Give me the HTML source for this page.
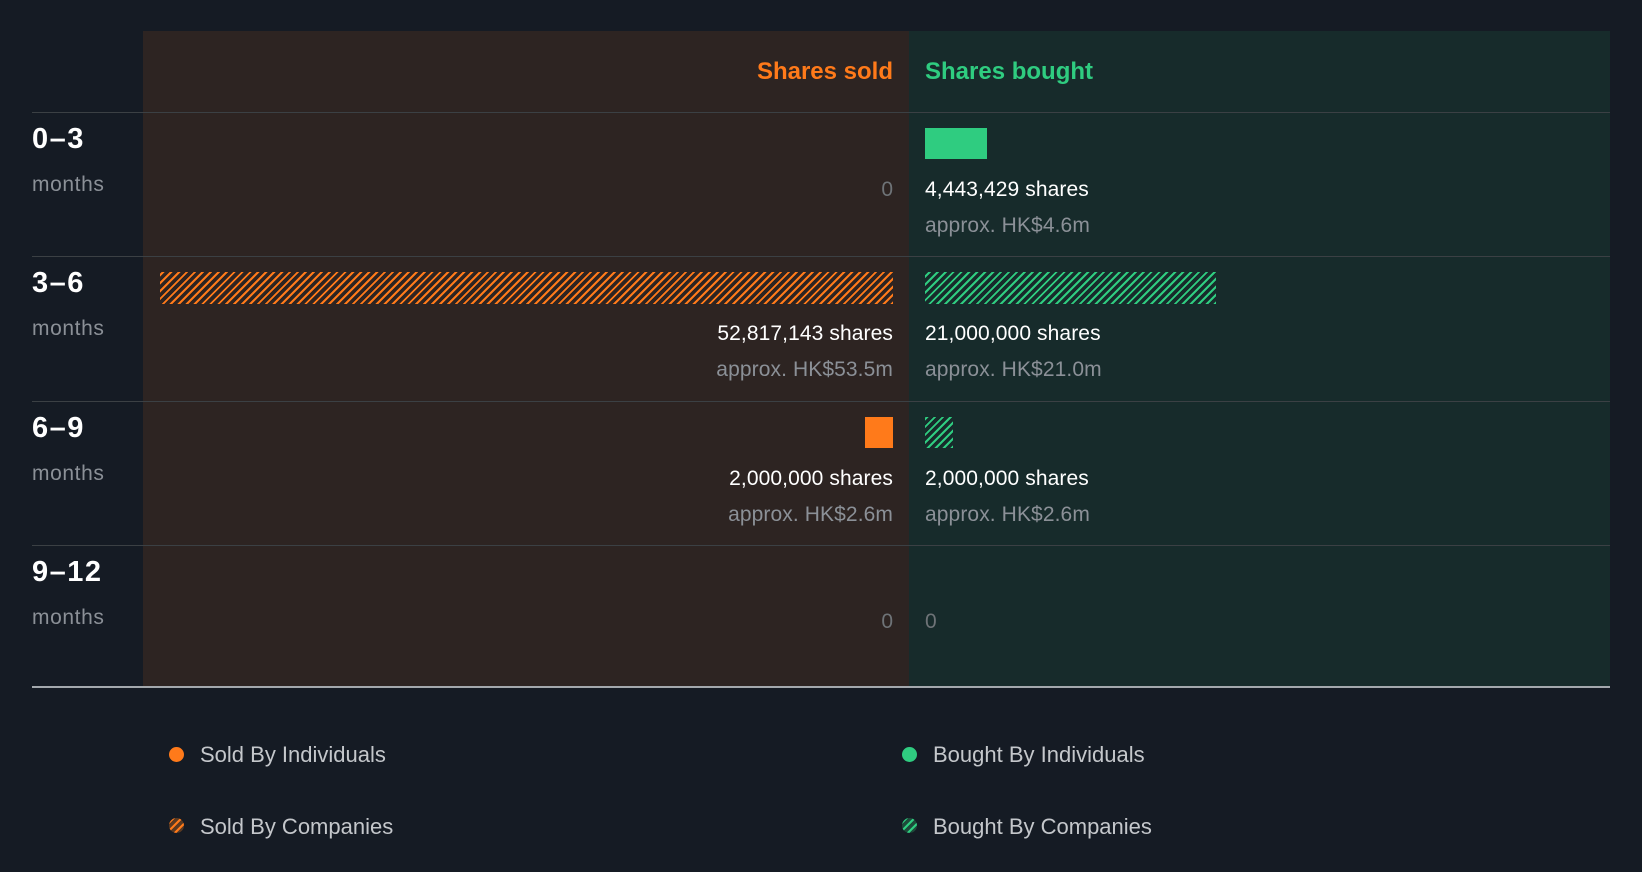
<!DOCTYPE html>
<html><head><meta charset="utf-8"><style>
*{margin:0;padding:0;box-sizing:border-box}
body{width:1642px;height:872px;background:#151b24;font-family:"Liberation Sans",sans-serif;position:relative;overflow:hidden}
.a{position:absolute;white-space:nowrap}
.sold{left:143px;width:766px;background:#2d2422}
.bought{left:909px;width:701px;background:#172b2b}
.line{left:32px;width:1578px;height:1px;background:#3b4044}
.lab{left:32px;color:#fff;font-weight:bold;font-size:29px;letter-spacing:1.5px}
.mo{left:32px;color:#8b9097;font-size:21px;letter-spacing:0.6px}
.r{right:749px;text-align:right}
.l{left:925px}
.sh{color:#fff;font-size:21px;letter-spacing:0.1px}
.ap{color:#8b9097;font-size:21px;letter-spacing:0.1px}
.z{color:#6e7377;font-size:21px}
.ho{background:repeating-linear-gradient(-45deg,#ff7a1a 0 2px,transparent 2px 5.6px)}
.hg{background:repeating-linear-gradient(-45deg,#2fcc80 0 2px,transparent 2px 5.6px)}
.leg{color:#c4c7cb;font-size:22px}
.dot{width:15px;height:15px;border-radius:50%}
</style></head><body>
<div class="a sold" style="top:31px;height:656px"></div>
<div class="a bought" style="top:31px;height:656px"></div>
<div class="a" style="right:749px;top:58px;color:#ff7a1a;font-weight:bold;font-size:24px">Shares sold</div>
<div class="a" style="left:925px;top:58px;color:#2fcc80;font-weight:bold;font-size:24px">Shares bought</div>
<div class="a line" style="top:112px"></div>
<div class="a line" style="top:256px"></div>
<div class="a line" style="top:401px"></div>
<div class="a line" style="top:545px"></div>
<div class="a line" style="top:686px;height:2px;background:#a3a8ad"></div>

<div class="a lab" style="top:123px">0–3</div><div class="a mo" style="top:173px">months</div>
<div class="a lab" style="top:267px">3–6</div><div class="a mo" style="top:317px">months</div>
<div class="a lab" style="top:412px">6–9</div><div class="a mo" style="top:462px">months</div>
<div class="a lab" style="top:556px">9–12</div><div class="a mo" style="top:606px">months</div>

<div class="a z r" style="top:178px">0</div>
<div class="a" style="left:925px;top:128px;width:62px;height:31px;background:#2fcc80"></div>
<div class="a sh l" style="top:178px">4,443,429 shares</div>
<div class="a ap l" style="top:214px">approx. HK$4.6m</div>

<div class="a ho" style="left:160px;top:272px;width:733px;height:32px"></div>
<div class="a hg" style="left:925px;top:272px;width:291px;height:32px"></div>
<div class="a sh r" style="top:322px">52,817,143 shares</div>
<div class="a ap r" style="top:358px">approx. HK$53.5m</div>
<div class="a sh l" style="top:322px">21,000,000 shares</div>
<div class="a ap l" style="top:358px">approx. HK$21.0m</div>

<div class="a" style="left:865px;top:417px;width:28px;height:31px;background:#ff7a1a"></div>
<div class="a hg" style="left:925px;top:417px;width:28px;height:31px"></div>
<div class="a sh r" style="top:467px">2,000,000 shares</div>
<div class="a ap r" style="top:503px">approx. HK$2.6m</div>
<div class="a sh l" style="top:467px">2,000,000 shares</div>
<div class="a ap l" style="top:503px">approx. HK$2.6m</div>

<div class="a z r" style="top:610px">0</div>
<div class="a z l" style="top:610px">0</div>

<div class="a dot" style="left:169px;top:747px;background:#ff7a1a"></div>
<div class="a leg" style="left:200px;top:742px">Sold By Individuals</div>
<div class="a dot" style="left:902px;top:747px;background:#2fcc80"></div>
<div class="a leg" style="left:933px;top:742px">Bought By Individuals</div>
<div class="a dot ho" style="left:169px;top:818px;background-color:#5a3a22"></div>
<div class="a leg" style="left:200px;top:814px">Sold By Companies</div>
<div class="a dot hg" style="left:902px;top:818px;background-color:#1e4a3a"></div>
<div class="a leg" style="left:933px;top:814px">Bought By Companies</div>
</body></html>
